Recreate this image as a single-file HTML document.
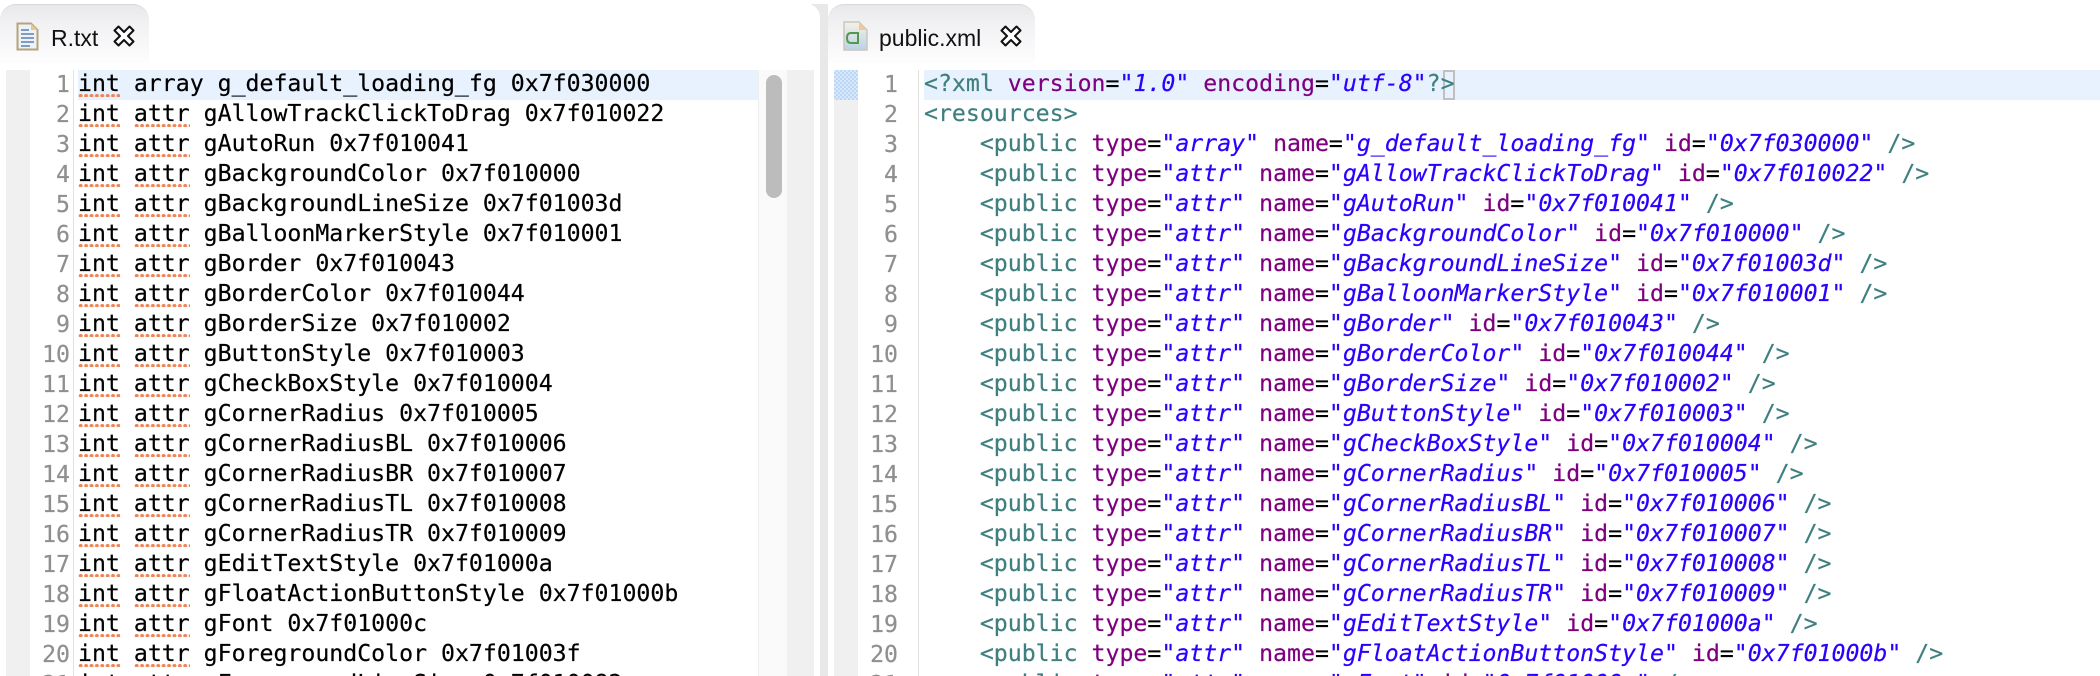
<!DOCTYPE html>
<html><head><meta charset="utf-8"><style>
html,body{margin:0;padding:0;background:#fff}
body{width:2100px;height:676px;position:relative;overflow:hidden}
div,pre,svg{position:absolute}
pre{margin:0;font:23.2px/30px "DejaVu Sans Mono","Liberation Mono",monospace;color:#000;white-space:pre;-webkit-text-stroke:.2px currentColor}
.num{color:#8f8f8f;text-align:right}
.tab{top:4px;height:59px;border-radius:16px 16px 0 0;background:linear-gradient(#e8e8eb,#f1f1f3 30%,#fdfdfe);border-top:1px solid #d8d8da;box-sizing:border-box}
.lbl{font:23px/28px "Liberation Sans",sans-serif;color:#111;top:24px;white-space:pre}
i.s{font-style:normal;background:radial-gradient(circle at 2.7px 1.8px,#ee8558 1.6px,transparent 2.3px) 0 23.5px/5.4px 30px repeat-x}
b{font-weight:normal}
.t{color:#3f7f7f}.a{color:#7f007f}.v{color:#2a00ff;font-style:italic}
</style></head><body>
<div style="left:6px;top:70px;width:24px;height:606px;background:#f0f0f0"></div>
<div style="left:73px;top:70px;width:1px;height:606px;background:#e2e2e2"></div>
<div style="left:78px;top:70px;width:680px;height:30px;background:#e8f2fe"></div>
<div style="left:758px;top:70px;width:29px;height:606px;background:#fafafa;border-left:1px solid #eee;box-sizing:border-box"></div>
<div style="left:766px;top:75px;width:16px;height:123px;background:#bcbcbc;border-radius:8px"></div>
<div style="left:787px;top:70px;width:27px;height:606px;background:#f0f0f0"></div>
<svg style="left:808px;top:2px" width="22" height="24" viewBox="0 0 22 24"><path d="M2 2H20V24H12V16Q12 6 2 2Z" fill="#e8e8e8"/></svg>
<div style="left:820px;top:20px;width:8px;height:656px;background:#e8e8e8"></div>
<div style="left:834px;top:70px;width:24px;height:606px;background:#f0f0f0"></div>
<div style="left:834px;top:70px;width:24px;height:30px;background:repeating-conic-gradient(#bcd6f6 0 25%,#d8e8fb 0 50%) 0 0/4px 4px"></div>
<div style="left:918px;top:70px;width:1px;height:606px;background:#e2e2e2"></div>
<div style="left:924px;top:70px;width:1176px;height:30px;background:#e8f2fe"></div>
<div style="left:1443px;top:70px;width:12px;height:30px;border:2px solid #c0c0c0;box-sizing:border-box"></div>

<div class="tab" style="left:0;width:149px"></div>
<div class="tab" style="left:828px;width:207px"></div>

<svg style="left:16px;top:22px" width="23" height="29" viewBox="0 0 23 29"><path d="M1.500 1.500H15L21.500 8V27.500H1.500Z" fill="#eef1f6" stroke="#b5a47a" stroke-width="2"/><path d="M15 1.500V8H21.500Z" fill="#e8c88c"/><path d="M5 8H13M5 12H18M5 16H18M5 20H18M5 24H14" stroke="#7f9cc4" stroke-width="2"/></svg>
<div class="lbl" style="left:51px">R.txt</div>
<svg style="left:113px;top:25px" width="22" height="22" viewBox="0 0 22 22"><path d="M1.500 5.500L5.500 1.500L11 7L16.500 1.500L20.500 5.500L15 11L20.500 16.500L16.500 20.500L11 15L5.500 20.500L1.500 16.500L7 11Z" fill="#fff" stroke="#111" stroke-width="2" stroke-linejoin="round"/></svg>

<svg style="left:843px;top:21px" width="25" height="30" viewBox="0 0 25 30"><defs><linearGradient id="g" x1="0" y1="0" x2="0" y2="1"><stop offset="0" stop-color="#f6f1e6"/><stop offset="1" stop-color="#bcd2e6"/></linearGradient></defs><path d="M1 1H16L24 9V29H1Z" fill="url(#g)" stroke="#c8c8c0" stroke-width="1.500"/><path d="M16 1V9H24Z" fill="#f0c89c"/><path d="M16 12H8Q4 12 4 17Q4 22 8 22H16M15 12V22" fill="none" stroke="#4f9a4f" stroke-width="2"/></svg>
<div class="lbl" style="left:879px">public.xml</div>
<svg style="left:1000px;top:25px" width="22" height="22" viewBox="0 0 22 22"><path d="M1.500 5.500L5.500 1.500L11 7L16.500 1.500L20.500 5.500L15 11L20.500 16.500L16.500 20.500L11 15L5.500 20.500L1.500 16.500L7 11Z" fill="#fff" stroke="#111" stroke-width="2" stroke-linejoin="round"/></svg>

<pre class="num" style="left:28px;top:70px;width:42px;height:606px;overflow:hidden">1
2
3
4
5
6
7
8
9
10
11
12
13
14
15
16
17
18
19
20
21</pre>
<pre style="left:78px;top:69px;width:680px;height:607px;overflow:hidden"><i class="s">int</i> array g_default_loading_fg 0x7f030000
<i class="s">int</i> <i class="s">attr</i> gAllowTrackClickToDrag 0x7f010022
<i class="s">int</i> <i class="s">attr</i> gAutoRun 0x7f010041
<i class="s">int</i> <i class="s">attr</i> gBackgroundColor 0x7f010000
<i class="s">int</i> <i class="s">attr</i> gBackgroundLineSize 0x7f01003d
<i class="s">int</i> <i class="s">attr</i> gBalloonMarkerStyle 0x7f010001
<i class="s">int</i> <i class="s">attr</i> gBorder 0x7f010043
<i class="s">int</i> <i class="s">attr</i> gBorderColor 0x7f010044
<i class="s">int</i> <i class="s">attr</i> gBorderSize 0x7f010002
<i class="s">int</i> <i class="s">attr</i> gButtonStyle 0x7f010003
<i class="s">int</i> <i class="s">attr</i> gCheckBoxStyle 0x7f010004
<i class="s">int</i> <i class="s">attr</i> gCornerRadius 0x7f010005
<i class="s">int</i> <i class="s">attr</i> gCornerRadiusBL 0x7f010006
<i class="s">int</i> <i class="s">attr</i> gCornerRadiusBR 0x7f010007
<i class="s">int</i> <i class="s">attr</i> gCornerRadiusTL 0x7f010008
<i class="s">int</i> <i class="s">attr</i> gCornerRadiusTR 0x7f010009
<i class="s">int</i> <i class="s">attr</i> gEditTextStyle 0x7f01000a
<i class="s">int</i> <i class="s">attr</i> gFloatActionButtonStyle 0x7f01000b
<i class="s">int</i> <i class="s">attr</i> gFont 0x7f01000c
<i class="s">int</i> <i class="s">attr</i> gForegroundColor 0x7f01003f
<i class="s">int</i> <i class="s">attr</i> gForegroundLineSize 0x7f010082</pre>

<pre class="num" style="left:858px;top:70px;width:40px;height:606px;overflow:hidden">1
2
3
4
5
6
7
8
9
10
11
12
13
14
15
16
17
18
19
20
21</pre>
<pre style="left:924px;top:69px;width:1176px;height:607px;overflow:hidden"><b class="t">&lt;?xml</b> <b class="a">version</b>=<b class="v">"1.0"</b> <b class="a">encoding</b>=<b class="v">"utf-8"</b><b class="t">?&gt;</b>
<b class="t">&lt;resources&gt;</b>
    <b class="t">&lt;public</b> <b class="a">type</b>=<b class="v">"array"</b> <b class="a">name</b>=<b class="v">"g_default_loading_fg"</b> <b class="a">id</b>=<b class="v">"0x7f030000"</b> <b class="t">/&gt;</b>
    <b class="t">&lt;public</b> <b class="a">type</b>=<b class="v">"attr"</b> <b class="a">name</b>=<b class="v">"gAllowTrackClickToDrag"</b> <b class="a">id</b>=<b class="v">"0x7f010022"</b> <b class="t">/&gt;</b>
    <b class="t">&lt;public</b> <b class="a">type</b>=<b class="v">"attr"</b> <b class="a">name</b>=<b class="v">"gAutoRun"</b> <b class="a">id</b>=<b class="v">"0x7f010041"</b> <b class="t">/&gt;</b>
    <b class="t">&lt;public</b> <b class="a">type</b>=<b class="v">"attr"</b> <b class="a">name</b>=<b class="v">"gBackgroundColor"</b> <b class="a">id</b>=<b class="v">"0x7f010000"</b> <b class="t">/&gt;</b>
    <b class="t">&lt;public</b> <b class="a">type</b>=<b class="v">"attr"</b> <b class="a">name</b>=<b class="v">"gBackgroundLineSize"</b> <b class="a">id</b>=<b class="v">"0x7f01003d"</b> <b class="t">/&gt;</b>
    <b class="t">&lt;public</b> <b class="a">type</b>=<b class="v">"attr"</b> <b class="a">name</b>=<b class="v">"gBalloonMarkerStyle"</b> <b class="a">id</b>=<b class="v">"0x7f010001"</b> <b class="t">/&gt;</b>
    <b class="t">&lt;public</b> <b class="a">type</b>=<b class="v">"attr"</b> <b class="a">name</b>=<b class="v">"gBorder"</b> <b class="a">id</b>=<b class="v">"0x7f010043"</b> <b class="t">/&gt;</b>
    <b class="t">&lt;public</b> <b class="a">type</b>=<b class="v">"attr"</b> <b class="a">name</b>=<b class="v">"gBorderColor"</b> <b class="a">id</b>=<b class="v">"0x7f010044"</b> <b class="t">/&gt;</b>
    <b class="t">&lt;public</b> <b class="a">type</b>=<b class="v">"attr"</b> <b class="a">name</b>=<b class="v">"gBorderSize"</b> <b class="a">id</b>=<b class="v">"0x7f010002"</b> <b class="t">/&gt;</b>
    <b class="t">&lt;public</b> <b class="a">type</b>=<b class="v">"attr"</b> <b class="a">name</b>=<b class="v">"gButtonStyle"</b> <b class="a">id</b>=<b class="v">"0x7f010003"</b> <b class="t">/&gt;</b>
    <b class="t">&lt;public</b> <b class="a">type</b>=<b class="v">"attr"</b> <b class="a">name</b>=<b class="v">"gCheckBoxStyle"</b> <b class="a">id</b>=<b class="v">"0x7f010004"</b> <b class="t">/&gt;</b>
    <b class="t">&lt;public</b> <b class="a">type</b>=<b class="v">"attr"</b> <b class="a">name</b>=<b class="v">"gCornerRadius"</b> <b class="a">id</b>=<b class="v">"0x7f010005"</b> <b class="t">/&gt;</b>
    <b class="t">&lt;public</b> <b class="a">type</b>=<b class="v">"attr"</b> <b class="a">name</b>=<b class="v">"gCornerRadiusBL"</b> <b class="a">id</b>=<b class="v">"0x7f010006"</b> <b class="t">/&gt;</b>
    <b class="t">&lt;public</b> <b class="a">type</b>=<b class="v">"attr"</b> <b class="a">name</b>=<b class="v">"gCornerRadiusBR"</b> <b class="a">id</b>=<b class="v">"0x7f010007"</b> <b class="t">/&gt;</b>
    <b class="t">&lt;public</b> <b class="a">type</b>=<b class="v">"attr"</b> <b class="a">name</b>=<b class="v">"gCornerRadiusTL"</b> <b class="a">id</b>=<b class="v">"0x7f010008"</b> <b class="t">/&gt;</b>
    <b class="t">&lt;public</b> <b class="a">type</b>=<b class="v">"attr"</b> <b class="a">name</b>=<b class="v">"gCornerRadiusTR"</b> <b class="a">id</b>=<b class="v">"0x7f010009"</b> <b class="t">/&gt;</b>
    <b class="t">&lt;public</b> <b class="a">type</b>=<b class="v">"attr"</b> <b class="a">name</b>=<b class="v">"gEditTextStyle"</b> <b class="a">id</b>=<b class="v">"0x7f01000a"</b> <b class="t">/&gt;</b>
    <b class="t">&lt;public</b> <b class="a">type</b>=<b class="v">"attr"</b> <b class="a">name</b>=<b class="v">"gFloatActionButtonStyle"</b> <b class="a">id</b>=<b class="v">"0x7f01000b"</b> <b class="t">/&gt;</b>
    <b class="t">&lt;public</b> <b class="a">type</b>=<b class="v">"attr"</b> <b class="a">name</b>=<b class="v">"gFont"</b> <b class="a">id</b>=<b class="v">"0x7f01000c"</b> <b class="t">/&gt;</b></pre>
</body></html>
